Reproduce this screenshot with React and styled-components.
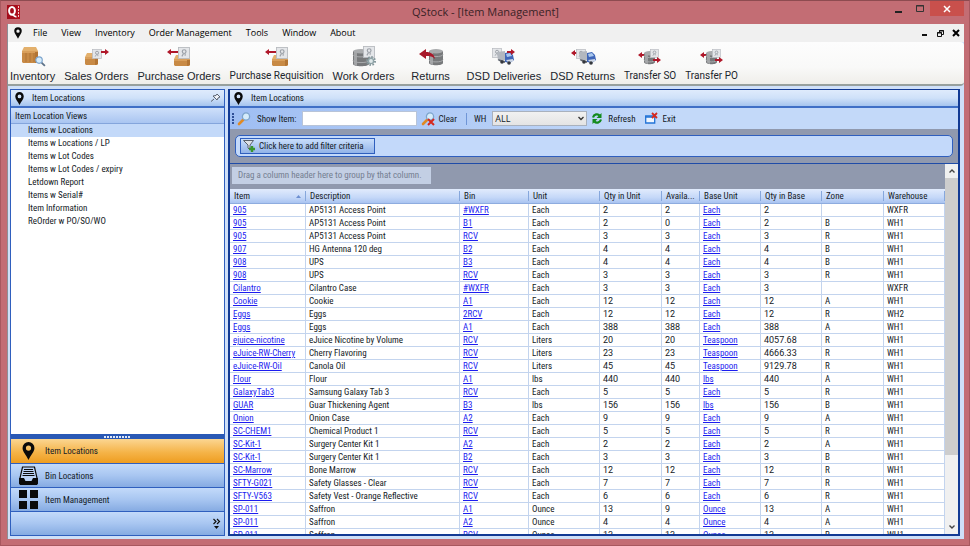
import React from "react";
import styled, { createGlobalStyle, css } from "styled-components";

const ui = `"Roboto Condensed", Roboto, "Liberation Sans", sans-serif`;
const segoe = `"Open Sans", "Noto Sans", sans-serif`;

const Global = createGlobalStyle`
  * { box-sizing: border-box; }
  body { margin: 0; font: 9px/12px ${ui}; color: #141a26; }
  button, input, select { font: inherit; color: inherit; margin: 0; }
  svg { display: block; flex: none; overflow: visible; }
`;

const Frame = styled.div`
  height: 100vh;
  display: flex;
  flex-direction: column;
  background: #c36d74;
  border: 1px solid #a8585f;
  border-top-color: #8e4b50;
  padding: 0 5px 6px 6px;
`;
const TitleBar = styled.header`
  flex: none;
  height: 23px;
  display: grid;
  grid-template-columns: 1fr auto 1fr;
  align-items: start;
`;
const LogoBox = styled.div`padding-top: 4px;`;
const Title = styled.h1`
  margin: 0;
  font: 11px/22px ${segoe};
  color: #3a2226;
`;
const WindowButtons = styled.div`
  display: flex;
  justify-content: flex-end;
`;
const WindowButton = styled.button`
  width: ${(p) => (p.$close ? 34 : 21)}px;
  height: 15px;
  padding: 0;
  border: 0;
  display: grid;
  place-items: center;
  background: ${(p) => (p.$close ? "#c9504c" : "transparent")};
`;
const Client = styled.div`
  flex: 1;
  min-height: 0;
  display: flex;
  flex-direction: column;
  background: #cfe0f8;
  border-left: 1px solid #8d8f96;
`;
const MenuBar = styled.nav`
  flex: none;
  height: 18px;
  padding: 0 0 0 6px;
  display: flex;
  align-items: center;
  background: #f0f0f0;
`;
const MenuItem = styled.button`
  border: 0;
  padding: 0;
  margin-left: ${(p) => (p.$first ? 11 : 14)}px;
  background: none;
  font: 9px/16px ${segoe};
  color: #000;
  white-space: nowrap;
`;
const MdiButtons = styled.div`
  margin-left: auto;
  display: flex;
`;
const MdiButton = styled.button`
  width: 16px;
  height: 14px;
  padding: 0;
  border: 0;
  background: none;
  display: grid;
  place-items: center;
`;
const ToolStrip = styled.div`
  flex: none;
  height: 44px;
  padding: 2px 2px 0;
  display: flex;
  gap: 9px;
  background: linear-gradient(#fdfdfd, #f9f9f8 60%, #efeeea);
  border-bottom: 2px solid #97a09d;
  border-radius: 0 4px 4px 0;
`;
const ToolButton = styled.button`
  border: 0;
  padding: 0;
  background: none;
  min-width: ${(p) => (p.$wide ? 54 : 0)}px;
  display: flex;
  flex-direction: column;
  align-items: center;
  font: 11px/16px "Liberation Sans", sans-serif;
  color: #20242c;
  white-space: nowrap;
  ${(p) => p.$alt && css`font: 10px/16px Roboto, sans-serif;`}
`;
const Workspace = styled.main`
  flex: 1;
  min-height: 0;
  display: flex;
  gap: 3px;
  padding: 3px 4px 3px 2px;
`;
const Panel = styled.section`
  min-width: 0;
  display: flex;
  flex-direction: column;
  overflow: hidden;
  border: 1px solid #2f5fbe;
  background: #fff;
`;
const SidePanel = styled(Panel)`flex: 0 0 215px;`;
const GridPanel = styled(Panel)`
  flex: 1;
  border-color: #123a94;
  border-left-width: 2px;
  border-right-width: 2px;
  border-bottom-width: 2px;
`;
const PanelHead = styled.div`
  flex: none;
  height: 18px;
  padding: 0 4px;
  display: flex;
  align-items: center;
  gap: 8px;
  background: linear-gradient(#dfebfc, #cfe1f9 50%, #a5c4ee);
  border-bottom: 2px solid #3f6fc6;
`;
const PanelTitle = styled.h2`
  flex: 1;
  margin: 0;
  font: inherit;
`;
const IconButton = styled.button`
  border: 0;
  padding: 0;
  background: none;
`;
const GroupHead = styled.h3`
  flex: none;
  margin: 0;
  height: 16px;
  padding: 2px 4px 0;
  font: inherit;
  background: linear-gradient(#cfe0fa, #a9c5f1);
  border-bottom: 1px solid #84a5dc;
`;
const ViewList = styled.div`
  flex: 1;
  min-height: 0;
  display: flex;
  flex-direction: column;
`;
const ViewItem = styled.button`
  height: 13px;
  padding: 0 0 0 17px;
  border: 0;
  text-align: left;
  line-height: 13px;
  background: ${(p) => (p.$active ? "#c3d9f9" : "transparent")};
`;
const Splitter = styled.div`
  flex: none;
  height: 5px;
  background: #2a59b5;
  display: grid;
  place-items: center;
`;
const NavButton = styled.button`
  flex: none;
  height: ${(p) => (p.$active ? 25 : 24)}px;
  padding: 0 8px;
  border: 0;
  border-bottom: 1px solid #2f5fbe;
  display: flex;
  align-items: center;
  gap: 7px;
  background: ${(p) =>
    p.$active
      ? "linear-gradient(#fbd692, #f5b449 55%, #ee9d20)"
      : "linear-gradient(#c3dafa, #a8c6f1 50%, #86abe2)"};
`;
const NavFoot = styled.div`
  flex: none;
  height: 23px;
  padding: 0 4px;
  display: flex;
  align-items: center;
  justify-content: flex-end;
  background: linear-gradient(#c3dafa, #a8c6f1 50%, #86abe2);
`;
const NavIcon = styled.span`
  width: 19px;
  display: grid;
  place-items: center;
`;
const FilterStrip = styled.div`
  flex: none;
  height: 21px;
  padding: 0 2px;
  display: flex;
  align-items: center;
  background: linear-gradient(90deg, #9fbef3, #c3d9f9 60%);
`;
const StripLabel = styled.label`
  display: flex;
  align-items: center;
  gap: 6px;
  margin-left: 4px;
`;
const StripButton = styled.button`
  border: 0;
  padding: 0;
  background: none;
  display: flex;
  align-items: center;
  gap: ${(p) => p.$gap || 4}px;
  margin-left: ${(p) => p.$lead || 5}px;
`;
const ItemInput = styled.input`
  width: 115px;
  height: 15px;
  border: 1px solid #b8c4d8;
  padding: 0 2px;
  background: #fff;
`;
const Divider = styled.span`
  width: 1px;
  height: 12px;
  margin: 0 3px 0 9px;
  background: #6f95d6;
`;
const SelectWrap = styled.span`
  position: relative;
  display: block;
`;
const WhSelect = styled.select`
  appearance: none;
  width: 95px;
  height: 15px;
  display: block;
  padding: 0 2px;
  border: 1px solid #a9b1bd;
  border-radius: 0;
  background: linear-gradient(#f1f1f1, #e4e4e4);
  font: 9px/12px ${segoe};
`;
const SelectArrow = styled.span`
  position: absolute;
  right: 3px;
  top: 5px;
  pointer-events: none;
`;
const CriteriaArea = styled.div`
  flex: none;
  padding: 6px 5px;
  background: #9099ae;
`;
const CriteriaBox = styled.div`
  height: 22px;
  padding: 2px 4px;
  border: 1px solid #2f5fbe;
  border-radius: 5px;
  background: #c3d9fa;
`;
const CriteriaButton = styled.button`
  width: 135px;
  height: 16px;
  padding: 0 2px;
  display: flex;
  align-items: center;
  gap: 4px;
  border: 1px solid #2f5fbe;
  background: linear-gradient(#c9defb, #92b3e8);
  white-space: nowrap;
`;
const GridArea = styled.div`
  flex: 1;
  min-height: 0;
  display: flex;
  border-top: 1px solid #1f4ca8;
`;
const GridMain = styled.div`
  flex: 1;
  min-width: 0;
  overflow: hidden;
`;
const GroupBar = styled.div`
  height: 25px;
  padding: 3px 2px;
  background: #9099ae;
`;
const GroupHint = styled.span`
  display: inline-block;
  padding: 0 9px 0 6px;
  line-height: 17px;
  background: #c3cfe4;
  color: #747e91;
`;
const Table = styled.table`
  width: 100%;
  table-layout: fixed;
  border-collapse: separate;
  border-spacing: 0;
`;
const Col = styled.col`width: ${(p) => p.$w}px;`;
const Th = styled.th`
  height: 15px;
  padding: 0 0 0 4px;
  font-weight: 400;
  text-align: left;
  line-height: 14px;
  white-space: nowrap;
  overflow: hidden;
  background:
    linear-gradient(#86a7dc, #86a7dc) right center / 1px 10px no-repeat,
    linear-gradient(#e1ebfc, #c5d8f8 60%, #a9c4f1);
  border-bottom: 1px solid #8eacdf;
`;
const ThInner = styled.span`
  display: flex;
  align-items: center;
  justify-content: space-between;
  padding-right: 5px;
`;
const Td = styled.td`
  height: 13px;
  padding: 0 3px;
  line-height: 12px;
  white-space: nowrap;
  overflow: hidden;
  border-right: 1px solid #c3d4ee;
  border-bottom: 1px solid #c3d4ee;
  ${(p) => p.$numeric && css`font-family: Roboto, sans-serif;`}
`;
const CellLink = styled.a`color: #1c1cf0;`;
const ScrollBar = styled.div`
  flex: 0 0 13px;
  display: flex;
  flex-direction: column;
  background: #f0f0f0;
`;
const ScrollButton = styled.button`
  flex: 0 0 14px;
  border: 0;
  padding: 0;
  background: #f0f0f0;
  display: grid;
  place-items: center;
`;
const ScrollTrack = styled.div`flex: 1;`;
const ScrollThumb = styled.div`
  height: 81%;
  background: #cdcdcd;
`;

const Pin = ({ h = 13 }) => (
  <svg width={Math.round(h * 0.7)} height={h} viewBox="0 0 14 20">
    <path fillRule="evenodd" d="M7 0a6.6 6.6 0 0 0-6.6 6.7C.4 11 4.500 14.500 7 20c2.500-5.500 6.600-9 6.600-13.300A6.600 6.600 0 0 0 7 0zm0 3.900a2.900 2.900 0 1 1 0 5.800 2.900 2.900 0 0 1 0-5.800z" fill="#0a0a0a" />
  </svg>
);
const Logo = () => (
  <svg width="13" height="14" viewBox="0 0 13 14">
    <rect width="13" height="14" fill="#b5121f" />
    <path d="M0 0h10v14H0z" fill="#a50d1b" />
    <ellipse cx="5" cy="5.800" rx="2.900" ry="3.900" fill="none" stroke="#fff" strokeWidth="2" />
    <path d="M4.500 9c2 0 2 3.200 5 2.600" stroke="#fff" strokeWidth="1.600" fill="none" />
    <path d="M11.500 1v12" stroke="#f1c9cc" strokeDasharray="2 1" />
  </svg>
);
const Box = ({ x, y, w, h }) => (
  <g transform={`translate(${x} ${y})`}>
    <path d={`M2 0h${w - 4}l2 4H0z`} fill="#e3b06c" />
    <path d={`M0 4h${w}v${h - 5}l-1 1H1l-1-1z`} fill="#c88a45" />
    <path d={`M0 4h${w}v2H0z`} fill="#d99f5b" />
    <path d={`M${w - 3} 5h3v${h - 6}l-3 1z`} fill="#b37534" />
  </g>
);
const Doc = ({ x, y, s = 10 }) => (
  <g transform={`translate(${x} ${y}) scale(${s / 10})`}>
    <rect x=".5" y=".5" width="10" height="10" fill="#e4e6e9" stroke="#b7babf" strokeWidth=".8" />
    <circle cx="5.600" cy="4.200" r="1.700" fill="none" stroke="#9ca1a8" strokeWidth="1.100" />
    <path d="M5 6L3.500 8.500M6.500 6v2" stroke="#9ca1a8" />
  </g>
);
const Arrow = ({ x, y, w = 9, left }) => (
  <g transform={`translate(${x} ${y})`} fill="#b0182a">
    {left ? (
      <path d={`M0 0l4-3v2h${w - 4}v2H4v2z`} />
    ) : (
      <path d={`M${w} 0l-4-3v2H0v2h${w - 4}v2z`} />
    )}
  </g>
);
const Drum = ({ x, y, w, h }) => (
  <g transform={`translate(${x} ${y})`}>
    <path d={`M0 2v${h - 4}c0 3 ${w} 3 ${w} 0V2z`} fill="#77797b" />
    <path d={`M1 2v${h - 4}c0 1 2 2 3 2V2z`} fill="#a2a4a6" />
    <path d={`M0 ${h / 3}c0 3 ${w} 3 ${w} 0M0 ${(h * 2) / 3}c0 3 ${w} 3 ${w} 0`} fill="none" stroke="#a9abad" />
    <ellipse cx={w / 2} cy="2.200" rx={w / 2} ry="2.200" fill="#a9abad" />
  </g>
);
const Truck = ({ x, y }) => (
  <g transform={`translate(${x} ${y})`}>
    <path d="M0 1l8-1v9l-7 1z" fill="#b3b8bf" />
    <path d="M1 8l7 2v2L2 10z" fill="#5f646c" />
    <path d="M8 2l5-1 3 3 1 5-4 3-5-1z" fill="#3f66b8" />
    <path d="M9 3l4-1 2 3-5 1z" fill="#a9c8ee" />
    <path d="M9 9l7-1v2l-4 2z" fill="#cfd8e6" />
    <circle cx="5" cy="11" r="1.800" fill="#34373d" />
    <circle cx="12" cy="12" r="1.800" fill="#34373d" />
  </g>
);
const Lens = ({ x = 0, y = 0, s = 1, flip }) => (
  <g transform={`translate(${x} ${y}) scale(${s})`}>
    {flip ? (
      <path d="M7 7l4 4" stroke="#5d7288" strokeWidth="2" />
    ) : (
      <path d="M5.500 7.500L1 12" stroke="#e08a24" strokeWidth="2.600" strokeLinecap="round" />
    )}
    <circle cx={flip ? 4.5 : 8} cy={4.5} r="3.600" fill="#d5ecfb" stroke="#7ea5cd" strokeWidth="1.300" />
  </g>
);
const Gear = ({ x, y }) => (
  <g transform={`translate(${x} ${y})`}>
    <circle r="4" fill="none" stroke="#83969a" strokeWidth="2" strokeDasharray="1.600 1.500" />
    <circle r="2.600" fill="#dfe8e9" stroke="#8fa3a7" strokeWidth="1.400" />
  </g>
);

const art = {
  inventory: <><Box x={1} y={1} w={16} h={16} /><path d="M5 7v9M9 7v9M13 7v9" stroke="#a96f32" strokeWidth=".8" /><Lens x={14} y={10} s={0.9} flip /></>,
  sales: <><Box x={1} y={7} w={13} h={12} /><Doc x={8} y={3} s={9} /><Arrow x={17} y={6} w={8} /></>,
  purchase: <><Box x={7} y={9} w={16} h={11} /><Doc x={11} y={1} s={11} /><Arrow x={0} y={6} w={11} left /></>,
  work: <><Drum x={1} y={3} w={16} h={17} /><Doc x={11} y={0} s={11} /><Gear x={19} y={15} /></>,
  returns: <><Drum x={10} y={3} w={14} h={16} /><path d="M0 8l7-5v3c5 0 8 2 9 7-3-3-5-3-9-3v3z" fill="#a8192a" /></>,
  deliver: <><Doc x={0} y={2} s={9} /><Truck x={5} y={5} /><Arrow x={15} y={6} w={8} /></>,
  dsdret: <><Arrow x={0} y={7} w={9} left /><Doc x={5} y={3} s={9} /><Truck x={8} y={5} /></>,
  transfer: <><Arrow x={0} y={9} w={9} left /><Drum x={6} y={5} w={11} h={13} /><Doc x={12} y={3} s={8} /><Arrow x={15} y={14} w={8} /></>,
};
const tools = [
  ["Inventory", "inventory"],
  ["Sales Orders", "sales"],
  ["Purchase Orders", "purchase"],
  ["Purchase Requisition", "purchase", "alt"],
  ["Work Orders", "work"],
  ["Returns", "returns", "wide"],
  ["DSD Deliveries", "deliver"],
  ["DSD Returns", "dsdret"],
  ["Transfer SO", "transfer", "alt"],
  ["Transfer PO", "transfer", "alt"],
];
const menus = ["File", "View", "Inventory", "Order Management", "Tools", "Window", "About"];
const views = [
  "Items w Locations",
  "Items w Locations / LP",
  "Items w Lot Codes",
  "Items w Lot Codes / expiry",
  "Letdown Report",
  "Items w Serial#",
  "Item Information",
  "ReOrder w PO/SO/WO",
];
const columns = [
  ["Item", 76],
  ["Description", 154],
  ["Bin", 69],
  ["Unit", 71],
  ["Qty in Unit", 62],
  ["Availa...", 38],
  ["Base Unit", 61],
  ["Qty in Base", 61],
  ["Zone", 62],
  ["Warehouse", 61],
];
const rows = `905|AP5131 Access Point|#WXFR|Each|2|2|Each|2||WXFR
905|AP5131 Access Point|B1|Each|2|0|Each|2|B|WH1
905|AP5131 Access Point|RCV|Each|3|3|Each|3|R|WH1
907|HG Antenna 120 deg|B2|Each|4|4|Each|4|B|WH1
908|UPS|B3|Each|4|4|Each|4|B|WH1
908|UPS|RCV|Each|3|3|Each|3|R|WH1
Cilantro|Cilantro Case|#WXFR|Each|3|3|Each|3||WXFR
Cookie|Cookie|A1|Each|12|12|Each|12|A|WH1
Eggs|Eggs|2RCV|Each|12|12|Each|12|R|WH2
Eggs|Eggs|A1|Each|388|388|Each|388|A|WH1
ejuice-nicotine|eJuice Nicotine by Volume|RCV|Liters|20|20|Teaspoon|4057.68|R|WH1
eJuice-RW-Cherry|Cherry Flavoring|RCV|Liters|23|23|Teaspoon|4666.33|R|WH1
eJuice-RW-Oil|Canola Oil|RCV|Liters|45|45|Teaspoon|9129.78|R|WH1
Flour|Flour|A1|lbs|440|440|lbs|440|A|WH1
GalaxyTab3|Samsung Galaxy Tab 3|RCV|Each|5|5|Each|5|R|WH1
GUAR|Guar Thickening Agent|B3|lbs|156|156|lbs|156|B|WH1
Onion|Onion Case|A2|Each|9|9|Each|9|A|WH1
SC-CHEM1|Chemical Product 1|RCV|Each|5|5|Each|5|R|WH1
SC-Kit-1|Surgery Center Kit 1|A2|Each|2|2|Each|2|A|WH1
SC-Kit-1|Surgery Center Kit 1|B2|Each|3|3|Each|3|B|WH1
SC-Marrow|Bone Marrow|RCV|Each|12|12|Each|12|R|WH1
SFTY-G021|Safety Glasses - Clear|RCV|Each|7|7|Each|7|R|WH1
SFTY-V563|Safety Vest - Orange Reflective|RCV|Each|6|6|Each|6|R|WH1
SP-011|Saffron|A1|Ounce|13|9|Ounce|13|A|WH1
SP-011|Saffron|A2|Ounce|4|4|Ounce|4|A|WH1
SP-011|Saffron|RCV|Ounce|13|13|Ounce|13|R|WH1`
  .split("\n")
  .map((line) => line.split("|"));
const linked = new Set([0, 2, 6]);
const numeric = new Set([4, 5, 7]);

export default function App() {
  return (
    <Frame>
      <Global />
      <TitleBar>
        <LogoBox><Logo /></LogoBox>
        <Title>QStock - [Item Management]</Title>
        <WindowButtons>
          <WindowButton aria-label="Minimize">
            <svg width="7" height="8"><path d="M0 7h7" stroke="#222" strokeWidth="2" /></svg>
          </WindowButton>
          <WindowButton aria-label="Maximize">
            <svg width="8" height="7"><path d="M.5.500h7v6h-7zM0 1h8" stroke="#333" fill="none" /></svg>
          </WindowButton>
          <WindowButton $close aria-label="Close">
            <svg width="6" height="6"><path d="M0 0l6 6M6 0L0 6" stroke="#fff" strokeWidth="1.500" /></svg>
          </WindowButton>
        </WindowButtons>
      </TitleBar>
      <Client>
        <MenuBar>
          <Pin h={12} />
          {menus.map((m, i) => <MenuItem key={m} $first={i === 0}>{m}</MenuItem>)}
          <MdiButtons>
            <MdiButton aria-label="Minimize child window">
              <svg width="5" height="6"><path d="M0 5h5" stroke="#111" strokeWidth="2" /></svg>
            </MdiButton>
            <MdiButton aria-label="Restore child window">
              <svg width="7" height="7"><path d="M2.500 2.500V.500h4v4h-2M.500 2.500h4v4h-4zM2 1h5M0 3h5" stroke="#111" fill="none" /></svg>
            </MdiButton>
            <MdiButton aria-label="Close child window">
              <svg width="6" height="6"><path d="M0 0l6 6M6 0L0 6" stroke="#000" strokeWidth="2" /></svg>
            </MdiButton>
          </MdiButtons>
        </MenuBar>
        <ToolStrip>
          {tools.map(([label, icon, kind]) => (
            <ToolButton key={label} $alt={kind === "alt"} $wide={kind === "wide"}>
              <svg width="24" height="24" viewBox="0 -2 24 24">{art[icon]}</svg>
              {label}
            </ToolButton>
          ))}
        </ToolStrip>
        <Workspace>
          <SidePanel>
            <PanelHead>
              <Pin />
              <PanelTitle>Item Locations</PanelTitle>
              <IconButton aria-label="Pin panel">
                <svg width="9" height="8"><path d="M0 7.500L3 5" stroke="#59616e" /><path d="M2 2l4 4 1-2 2-1-3-3-1 1.500z" fill="#eef3fb" stroke="#59616e" /></svg>
              </IconButton>
            </PanelHead>
            <GroupHead>Item Location Views</GroupHead>
            <ViewList>
              {views.map((v, i) => <ViewItem key={v} $active={i === 0}>{v}</ViewItem>)}
            </ViewList>
            <Splitter>
              <svg width="27" height="2"><path d="M0 1h27" stroke="#dfe9fa" strokeWidth="2" strokeDasharray="2 1" /></svg>
            </Splitter>
            <NavButton $active><NavIcon><Pin h={18} /></NavIcon>Item Locations</NavButton>
            <NavButton>
              <NavIcon>
                <svg width="19" height="19">
                  <path d="M3.500 1h12l2.500 11v5.500H1V12z" fill="#b9d2f6" stroke="#0a0a0a" strokeWidth="1.200" />
                  <path d="M5 3.500h9M4.500 5.500h10M4 7.500h11M3.500 9.500h12" stroke="#0a0a0a" />
                  <path d="M0 12h5l1.500 3h6l1.500-3h5v5.500l-1 1.500H1l-1-1.500z" fill="#0a0a0a" />
                </svg>
              </NavIcon>
              Bin Locations
            </NavButton>
            <NavButton>
              <NavIcon>
                <svg width="19" height="19"><path d="M0 0h8v8H0zM11 0h8v8h-8zM0 11h8v8H0zM11 11h8v8h-8z" fill="#0a0a0a" /></svg>
              </NavIcon>
              Item Management
            </NavButton>
            <NavFoot>
              <IconButton aria-label="Configure buttons">
                <svg width="7" height="10"><path d="M.500 0L3 2.500.500 5M4 0l2.500 2.500L4 5" stroke="#111" fill="none" strokeWidth="1.200" /><path d="M1 7h5L3.500 10z" fill="#111" /></svg>
              </IconButton>
            </NavFoot>
          </SidePanel>
          <GridPanel>
            <PanelHead>
              <Pin />
              <PanelTitle>Item Locations</PanelTitle>
            </PanelHead>
            <FilterStrip>
              <svg width="2" height="12"><path d="M1 0v12" stroke="#2f4f96" strokeWidth="2" strokeDasharray="2 1" /></svg>
              <StripLabel>
                <svg width="13" height="13"><Lens /></svg>
                <span>Show Item:</span>
                <ItemInput type="text" />
              </StripLabel>
              <StripButton>
                <svg width="12" height="13"><Lens /><path d="M6 7l6 6M12 7l-6 6" stroke="#d5281f" strokeWidth="2" /></svg>
                Clear
              </StripButton>
              <Divider />
              <StripLabel>
                <span>WH</span>
                <SelectWrap>
                  <WhSelect defaultValue="ALL"><option>ALL</option></WhSelect>
                  <SelectArrow><svg width="6" height="5"><path d="M.500 1L3 3.500 5.500 1" stroke="#333" strokeWidth="1.300" fill="none" /></svg></SelectArrow>
                </SelectWrap>
              </StripLabel>
              <StripButton $gap={6}>
                <svg width="10" height="11"><path d="M1 4.500C2 1 6 .500 7.500 2.500M9 6.500C8 10 4 10.500 2.500 8.500" stroke="#128a1c" strokeWidth="2.200" fill="none" /><path d="M9.500 0v5h-5zM.500 11V6h5z" fill="#128a1c" /></svg>
                Refresh
              </StripButton>
              <StripButton $lead={9} $gap={6}>
                <svg width="12" height="11"><path d="M.700 3h9v7h-9z" fill="#eef5fe" stroke="#2273d6" strokeWidth="1.300" /><path d="M0 4h7" stroke="#2273d6" strokeWidth="1.500" /><path d="M7 0l5 5M12 0L7 5" stroke="#d5281f" strokeWidth="1.800" /></svg>
                Exit
              </StripButton>
            </FilterStrip>
            <CriteriaArea>
              <CriteriaBox>
                <CriteriaButton>
                  <svg width="12" height="12"><path d="M.500.500h10L7 5v5L5 8V5z" fill="#dde1e6" stroke="#59616b" /><path d="M9 6v6M6 9h6" stroke="#37962c" strokeWidth="2.400" /></svg>
                  Click here to add filter criteria
                </CriteriaButton>
              </CriteriaBox>
            </CriteriaArea>
            <GridArea>
              <GridMain>
                <GroupBar><GroupHint>Drag a column header here to group by that column.</GroupHint></GroupBar>
                <Table>
                  <colgroup>{columns.map(([n, w]) => <Col key={n} $w={w} />)}</colgroup>
                  <thead>
                    <tr>
                      {columns.map(([name], i) => (
                        <Th key={name} scope="col">
                          <ThInner>
                            {name}
                            {i === 0 && <svg width="5" height="3"><path d="M0 3l2.500-3L5 3z" fill="#6d8fd0" /></svg>}
                          </ThInner>
                        </Th>
                      ))}
                    </tr>
                  </thead>
                  <tbody>
                    {rows.map((r, ri) => (
                      <tr key={ri}>
                        {r.map((cell, ci) => (
                          <Td key={ci} $numeric={numeric.has(ci)}>
                            {linked.has(ci) ? <CellLink href="#">{cell}</CellLink> : cell}
                          </Td>
                        ))}
                      </tr>
                    ))}
                  </tbody>
                </Table>
              </GridMain>
              <ScrollBar>
                <ScrollButton aria-label="Scroll up">
                  <svg width="6" height="4"><path d="M.500 3.500L3 1l2.500 2.500" stroke="#444" strokeWidth="1.400" fill="none" /></svg>
                </ScrollButton>
                <ScrollTrack><ScrollThumb /></ScrollTrack>
                <ScrollButton aria-label="Scroll down">
                  <svg width="6" height="4"><path d="M.500.500L3 3 5.500.500" stroke="#444" strokeWidth="1.400" fill="none" /></svg>
                </ScrollButton>
              </ScrollBar>
            </GridArea>
          </GridPanel>
        </Workspace>
      </Client>
    </Frame>
  );
}
